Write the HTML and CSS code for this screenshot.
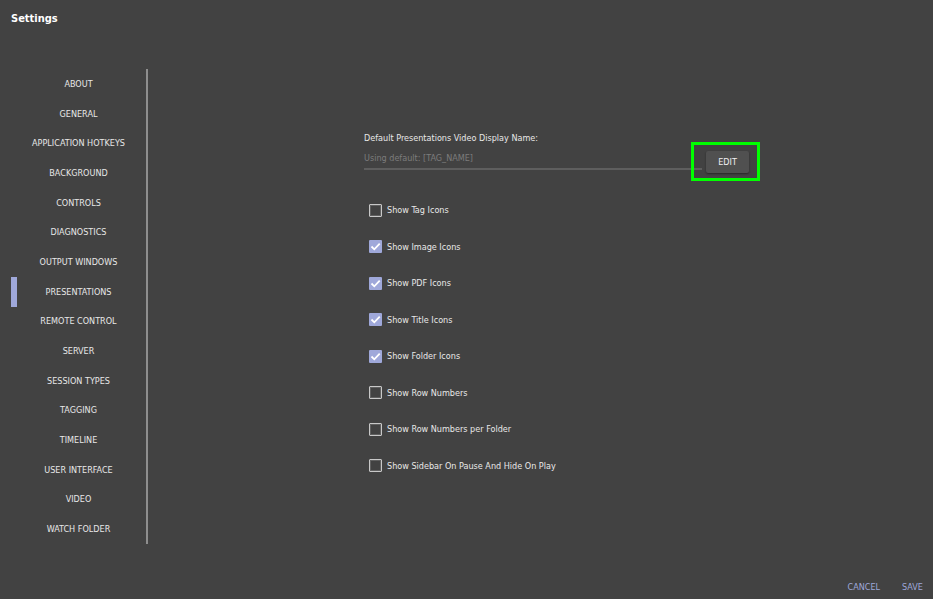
FILE: index.html
```html
<!DOCTYPE html>
<html lang="en">
<head>
  <meta charset="UTF-8">
  <title>Settings</title>
  <meta name="viewport" content="width=device-width, initial-scale=1.0">
  <link rel="stylesheet" href="styles.css">
</head>
<body>
  <header class="header">
    <h1>Settings</h1>
  </header>

  <div class="main">
    <nav class="sidebar">
      <a href="#about">ABOUT</a>
      <a href="#general">GENERAL</a>
      <a href="#hotkeys">APPLICATION HOTKEYS</a>
      <a href="#background">BACKGROUND</a>
      <a href="#controls">CONTROLS</a>
      <a href="#diagnostics">DIAGNOSTICS</a>
      <a href="#output">OUTPUT WINDOWS</a>
      <a href="#presentations" class="active">PRESENTATIONS</a>
      <a href="#remote">REMOTE CONTROL</a>
      <a href="#server">SERVER</a>
      <a href="#sessions">SESSION TYPES</a>
      <a href="#tagging">TAGGING</a>
      <a href="#timeline">TIMELINE</a>
      <a href="#interface">USER INTERFACE</a>
      <a href="#video">VIDEO</a>
      <a href="#watch">WATCH FOLDER</a>
    </nav>

    <main class="panel">
      <div class="name-row">
        <div class="field">
          <label for="displayName">Default Presentations Video Display Name:</label>
          <input type="text" id="displayName" placeholder="Using default: [TAG_NAME]">
        </div>
        <div class="highlight">
          <button type="button" class="edit">EDIT</button>
        </div>
      </div>

      <div class="options">
        <label><input type="checkbox">Show Tag Icons</label>
        <label><input type="checkbox" checked>Show Image Icons</label>
        <label><input type="checkbox" checked>Show PDF Icons</label>
        <label><input type="checkbox" checked>Show Title Icons</label>
        <label><input type="checkbox" checked>Show Folder Icons</label>
        <label><input type="checkbox">Show Row Numbers</label>
        <label><input type="checkbox">Show Row Numbers per Folder</label>
        <label><input type="checkbox">Show Sidebar On Pause And Hide On Play</label>
      </div>
    </main>
  </div>

  <footer class="footer">
    <button type="button">CANCEL</button>
    <button type="button">SAVE</button>
  </footer>
</body>
</html>
```
FILE: styles.css
```css
*, *::after {
  box-sizing: border-box;
}
body {
  margin: 0;
  min-height: 100vh;
  display: flex;
  flex-direction: column;
  background-color: #424242;
  color: #e8e8e8;
  font-family: "DejaVu Sans Condensed", "DejaVu Sans", sans-serif;
  font-size: 9px;
  line-height: 12px;
}
button, input {
  font: inherit;
}
.header {
  height: 69px;
  padding: 11px;
}
.header h1 {
  margin: 0;
  font-size: 11px;
  line-height: 16px;
  color: #fff;
}
.main {
  flex: 1;
  display: flex;
}
.sidebar {
  width: 137px;
  margin-left: 11px;
  display: flex;
  flex-direction: column;
  border-right: 2px solid #8e8e8e;
}
.sidebar a {
  flex: 1;
  display: flex;
  align-items: center;
  justify-content: center;
  border-left: 6px solid transparent;
  padding-right: 6px;
  color: inherit;
  text-decoration: none;
}
.sidebar a.active {
  border-left-color: #9fa8da;
}
.panel {
  flex: 1;
  display: flex;
  flex-direction: column;
  align-items: center;
  padding: 63px 0 60px 43px;
}
.name-row, .options {
  width: 396px;
}
.name-row {
  display: flex;
  align-items: flex-start;
}
.field {
  flex: 1;
  display: flex;
  flex-direction: column;
}
.field input {
  height: 26px;
  padding: 4px 0 0;
  border: 0;
  border-bottom: 2px solid #5e5e5e;
  border-radius: 0;
  background: none;
  color: inherit;
  outline: none;
}
.field input::placeholder {
  color: #7c7c7c;
  opacity: 1;
}
.highlight {
  position: relative;
  padding: 19px 11px 0 4px;
}
/* green callout frame around the button */
.highlight::after {
  content: "";
  position: absolute;
  top: 10px;
  right: 0;
  width: 69px;
  height: 39px;
  border: 3px solid #00ff00;
  pointer-events: none;
}
.edit {
  display: block;
  width: 43px;
  height: 22px;
  padding: 0;
  border: 0;
  border-radius: 2px;
  background-color: #505050;
  color: #f0f0f0;
  box-shadow: 0 1px 2px rgba(0, 0, 0, 0.4);
}
.options {
  flex: 1;
  display: flex;
  flex-direction: column;
  margin-top: 19px;
  padding-left: 5px;
}
.options label {
  flex: 1;
  display: flex;
  align-items: center;
  gap: 5px;
}
.options input {
  appearance: none;
  width: 13px;
  height: 13px;
  margin: 0;
  border: 1px solid #c8c8c8;
  border-radius: 1px;
  box-shadow: inset 0 0 0 1px #606060;
}
.options input:checked {
  border: 0;
  box-shadow: none;
  background: #9fa8da url("data:image/svg+xml,%3Csvg xmlns='http://www.w3.org/2000/svg' viewBox='0 0 13 13'%3E%3Cpath d='M2.5 6.5l2.8 2.8 5.4-5.6' fill='none' stroke='white' stroke-width='1.8'/%3E%3C/svg%3E") center / 13px 13px;
}
.footer {
  height: 55px;
  padding: 0 10px 6px;
  display: flex;
  align-items: flex-end;
  justify-content: flex-end;
  gap: 22px;
}
.footer button {
  padding: 0;
  border: 0;
  background: none;
  color: #9fa8da;
}
```
